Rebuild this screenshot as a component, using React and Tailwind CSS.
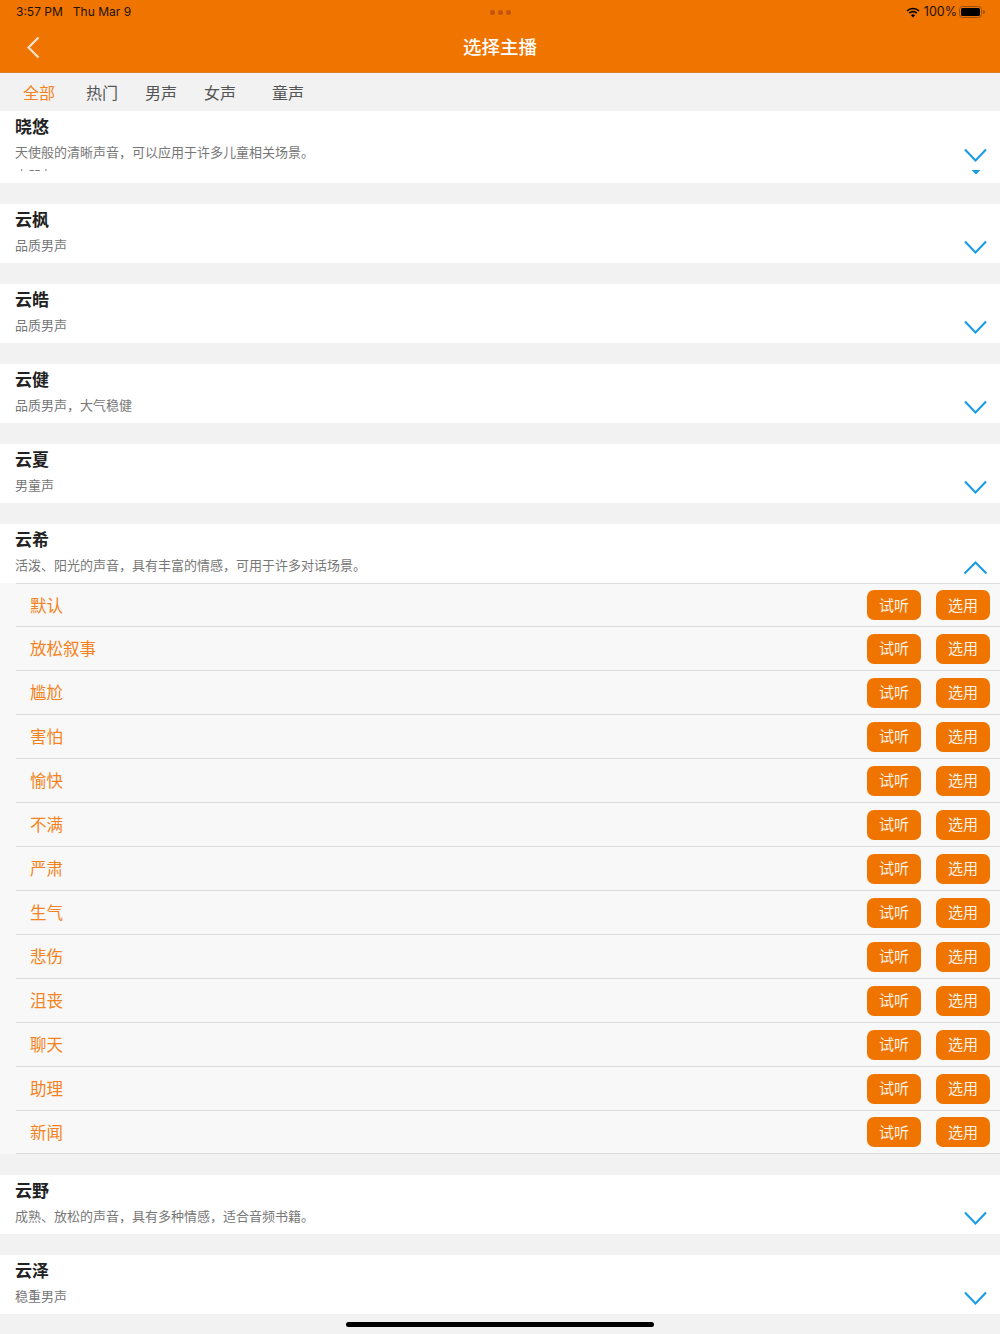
const tabs = [
  { label: '全部', className: 'ml-[23px] text-[#f58220]' },
  { label: '热门', className: 'ml-[31px]' },
  { label: '男声', className: 'ml-[27px]' },
  { label: '女声', className: 'ml-[27px]' },
  { label: '童声', className: 'ml-[36px]' },
]

const styles = ['默认', '放松叙事', '尴尬', '害怕', '愉快', '不满', '严肃', '生气', '悲伤', '沮丧', '聊天', '助理', '新闻']

function Chevron({ up, className }) {
  return (
    <svg width="25" height="15" viewBox="0 0 25 15" className={className}>
      <path d={up ? 'M1.5 13.5 L12.5 2.5 L23.5 13.5' : 'M2 1.5 L12.5 12.5 L23 1.5'} fill="none" stroke="#1a9be6" strokeWidth="2.1" />
    </svg>
  )
}

function Anchor({ name, desc, open }) {
  return (
    <div className="flex h-[59px] justify-between bg-white pl-[15px] pr-[12px]">
      <div>
        <p className="mt-[2px] text-[17px] leading-[26px] font-bold text-[#222]">{name}</p>
        <p className="mt-[3px] text-[13px] leading-[20px] text-[#777]">{desc}</p>
      </div>
      <Chevron up={open} className="mt-[36px]" />
    </div>
  )
}

function StyleRow({ name, short }) {
  return (
    <div className={`ml-[16px] flex items-center border-b border-[#dcdcdc] pr-[10px] pl-[14px] ${short ? 'h-[43px]' : 'h-[44px]'}`}>
      <span className="flex-1 text-[16.5px] text-[#f58220]">{name}</span>
      <button className="h-[30px] w-[54px] rounded-[7px] bg-[#f07400] text-[15px] text-[#fff3e6]">试听</button>
      <button className="ml-[15px] h-[30px] w-[54px] rounded-[7px] bg-[#f07400] text-[15px] text-[#fff3e6]">选用</button>
    </div>
  )
}

export default function App() {
  return (
    <div className="flex h-[1334px] w-[1000px] flex-col overflow-hidden bg-[#f2f2f2] font-['Noto_Sans_CJK_SC',sans-serif]">
      {/* status bar + nav */}
      <div className="h-[73px] shrink-0 border-b border-[#d9812f] bg-[#f07400]">
        <div className="flex h-[24px] items-center px-[15px] font-['Inter',sans-serif] text-[12px] text-[#1c1206]">
          <div className="flex flex-1 pl-[1px]">
            <span>3:57 PM</span>
            <span className="ml-[10px]">Thu Mar 9</span>
          </div>
          <div className="flex gap-[3px]">
            <span className="h-[5px] w-[5px] rounded-full bg-[#c4540c]" />
            <span className="h-[5px] w-[5px] rounded-full bg-[#c4540c]" />
            <span className="h-[5px] w-[5px] rounded-full bg-[#c4540c]" />
          </div>
          <div className="flex flex-1 items-center justify-end">
            <svg width="14" height="11" viewBox="0 0 14 11" className="mr-[4px]">
              <path d="M1 4 A8.5 8.5 0 0 1 13 4" fill="none" stroke="#000" strokeWidth="1.7" />
              <path d="M3.3 6.2 A5.2 5.2 0 0 1 10.7 6.2" fill="none" stroke="#000" strokeWidth="1.7" />
              <path d="M7 10.5 L4.9 8.2 A3 3 0 0 1 9.1 8.2 Z" fill="#000" />
            </svg>
            <span className="text-[12.5px]">100%</span>
            <svg width="26" height="12" viewBox="0 0 26 12" className="ml-[2px]">
              <rect x="0.5" y="0.5" width="22" height="11" rx="3" fill="none" stroke="#9a5210" />
              <rect x="2" y="2" width="19" height="8" rx="1.5" fill="#000" />
              <path d="M24 4 a2 2 0 0 1 0 4 Z" fill="#9a5210" />
            </svg>
          </div>
        </div>
        <div className="relative flex h-[46px] items-center justify-center">
          <svg width="14" height="23" viewBox="0 0 14 23" className="absolute left-[26px] top-[12px]">
            <path d="M12.5 1.5 L2.5 11.5 L12.5 21.5" fill="none" stroke="#fbe3cf" strokeWidth="2.2" />
          </svg>
          <h1 className="text-[18.5px] font-medium text-white">选择主播</h1>
        </div>
      </div>

      {/* tabs */}
      <div className="flex h-[38px] shrink-0 items-center pb-[1px] text-[16px] text-[#555]">
        {tabs.map(t => <span key={t.label} className={t.className}>{t.label}</span>)}
      </div>

      {/* first card, scrolled so the next line is clipped */}
      <div className="flex h-[72px] shrink-0 justify-between bg-white pl-[15px] pr-[12px]">
        <div className="h-[60px] overflow-hidden">
          <p className="text-[17px] leading-[30px] font-bold text-[#222]">晓悠</p>
          <p className="mt-[1px] text-[13px] leading-[20px] text-[#777]">天使般的清晰声音，可以应用于许多儿童相关场景。</p>
          <p className="mt-[3px] text-[13px] leading-[20px] text-[#777]">小朋友</p>
        </div>
        <div className="flex flex-col items-center">
          <Chevron className="mt-[37px]" />
          <svg width="10" height="5" viewBox="0 0 10 5" className="mt-[7px]">
            <path d="M0.5 0 L9.5 0 L5 4.5 Z" fill="#1a9be6" />
          </svg>
        </div>
      </div>

      <div className="mt-[21px] flex flex-col gap-[21px]">
        <Anchor name="云枫" desc="品质男声" />
        <Anchor name="云皓" desc="品质男声" />
        <Anchor name="云健" desc="品质男声，大气稳健" />
        <Anchor name="云夏" desc="男童声" />
        <div>
          <Anchor name="云希" desc="活泼、阳光的声音，具有丰富的情感，可用于许多对话场景。" open />
          <div className="bg-[#f8f8f8]">
            <div className="ml-[16px] border-t border-[#dcdcdc]" />
            {styles.map((s, i) => <StyleRow key={s} name={s} short={i === 0 || i === styles.length - 1} />)}
          </div>
        </div>
        <Anchor name="云野" desc="成熟、放松的声音，具有多种情感，适合音频书籍。" />
        <Anchor name="云泽" desc="稳重男声" />
      </div>

      {/* home indicator */}
      <div className="flex flex-1 items-center justify-center">
        <div className="h-[5px] w-[308px] rounded-full bg-black" />
      </div>
    </div>
  )
}
